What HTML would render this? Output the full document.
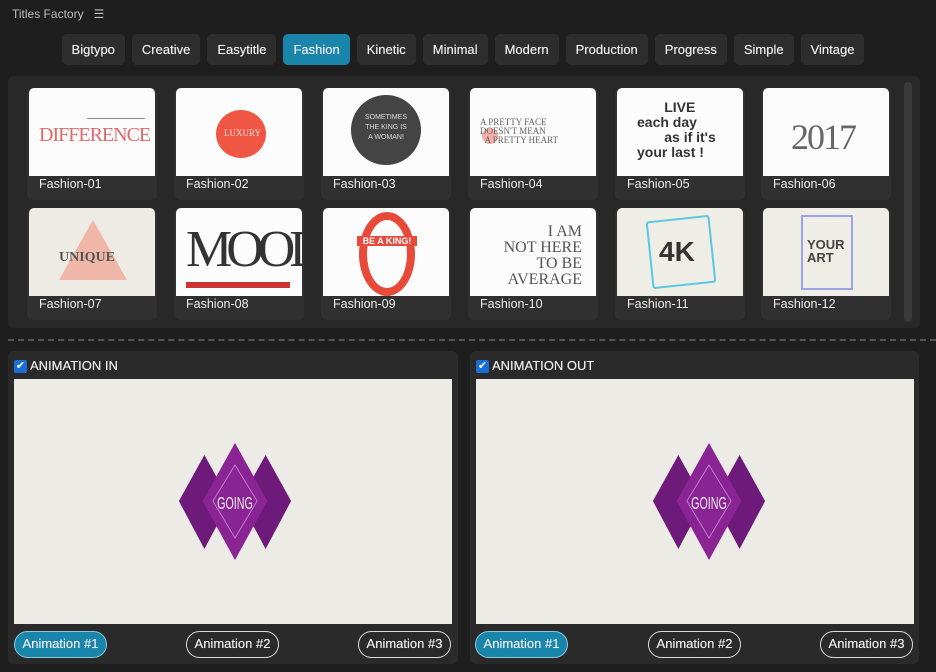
<!DOCTYPE html><html><head><style>
*{margin:0;padding:0;box-sizing:border-box}
body{width:936px;height:672px;background:#1e1e1e;font-family:"Liberation Sans",sans-serif;color:#fff;position:relative;overflow:hidden}
.title{position:absolute;left:12px;top:7px;font-size:12px;color:#bdbdbd}
.tabs{position:absolute;top:34px;left:0;width:926px;display:flex;justify-content:center;gap:7px}
.tab{height:31px;line-height:31px;padding:0 10px;background:#2d2d2d;border-radius:5px;font-size:13px;color:#eee;text-shadow:0 0 0.4px #eee}
.tab.a{background:#1a85ab}
.grid{position:absolute;left:8px;top:76px;width:912px;height:252px;background:#282828;border-radius:6px}
.card{position:absolute;width:130px;height:112px;background:#303030;border-radius:6px}
.img{position:absolute;left:0;top:0;width:126px;height:88px;background:#fdfcfd;border-radius:5px 5px 0 0;overflow:hidden;color:#444}
.lbl{position:absolute;left:10px;top:89px;font-size:12.5px;color:#eee}
.sb{position:absolute;left:904px;top:82px;width:8px;height:240px;background:#3a3a3a;border-radius:4px}
.dash{position:absolute;left:8px;top:339px;width:928px;border-top:2px dashed #555}
.panel{position:absolute;top:351px;width:450px;height:313px;background:#2a2a2a;border-radius:6px}
.chk{position:absolute;left:6px;top:9px;width:13px;height:13px;background:#1a6fd6;border-radius:2px;color:#fff;font-size:11px;line-height:13px;text-align:center}
.ph{position:absolute;left:22px;top:7px;font-size:13px;color:#eee;text-shadow:0 0 0.4px #eee}
.pv{position:absolute;left:6px;top:28px;width:438px;height:245px;background:#ecebe5}
.btn{position:absolute;top:280px;width:93px;height:27px;border:1.5px solid #ddd;border-radius:14px;font-size:13px;line-height:24px;text-align:center;color:#eee;text-shadow:0 0 0.4px #eee}
.btn.a{background:#1a85ab;border-color:#8cc8dc}
</style></head><body>
<div class="title">Titles Factory &nbsp; ☰</div>
<div class="tabs"><div class="tab">Bigtypo</div><div class="tab">Creative</div><div class="tab">Easytitle</div><div class="tab a">Fashion</div><div class="tab">Kinetic</div><div class="tab">Minimal</div><div class="tab">Modern</div><div class="tab">Production</div><div class="tab">Progress</div><div class="tab">Simple</div><div class="tab">Vintage</div></div>
<div class="grid"></div>
<div class="sb"></div>

<div class="card" style="left:27px;top:88px"><div class="img" style="left:2px"><div style="position:absolute;left:58px;top:30px;width:58px;height:1px;background:#888"></div><div style="position:absolute;left:10px;top:36px;font:20px 'Liberation Serif',serif;color:#e06a6a;letter-spacing:-1px">DIFFERENCE</div></div><div class="lbl" style="left:12px">Fashion-01</div></div>
<div class="card" style="left:174px;top:88px"><div class="img" style="left:2px"><div style="position:absolute;left:40px;top:22px;width:50px;height:48px;background:#ef5643;border-radius:50%"></div><div style="position:absolute;left:48px;top:40px;font:9px serif;color:#fdd">LUXURY</div></div><div class="lbl" style="left:12px">Fashion-02</div></div>
<div class="card" style="left:321px;top:88px"><div class="img" style="left:2px"><div style="position:absolute;left:28px;top:7px;width:70px;height:70px;background:#444;border-radius:50%"></div><div style="position:absolute;left:40px;top:25px;width:46px;font-size:7px;color:#ddd;text-align:center;line-height:10px">SOMETIMES THE KING IS A WOMAN!</div></div><div class="lbl" style="left:12px">Fashion-03</div></div>
<div class="card" style="left:468px;top:88px"><div class="img" style="left:2px"><div style="position:absolute;left:12px;top:40px;width:16px;height:16px;background:#f2b0a8;border-radius:50%"></div><div style="position:absolute;left:10px;top:30px;font:9px 'Liberation Serif',serif;line-height:9px;color:#666">A PRETTY FACE<br>DOESN'T MEAN<br>&nbsp;&nbsp;A PRETTY HEART</div></div><div class="lbl" style="left:12px">Fashion-04</div></div>
<div class="card" style="left:615px;top:88px"><div class="img" style="left:2px"><div style="position:absolute;left:20px;top:12px;font:bold 14px sans-serif;line-height:15px;color:#333;text-align:left;width:100px">&nbsp;&nbsp;&nbsp;&nbsp;&nbsp;&nbsp;&nbsp;LIVE<br>each day<br>&nbsp;&nbsp;&nbsp;&nbsp;&nbsp;&nbsp;&nbsp;as if it's<br>your last !</div></div><div class="lbl" style="left:12px">Fashion-05</div></div>
<div class="card" style="left:761px;top:88px"><div class="img" style="left:2px"><div style="position:absolute;left:28px;top:28px;font:36px 'Liberation Serif',serif;color:#666;letter-spacing:-2px">2017</div></div><div class="lbl" style="left:12px">Fashion-06</div></div>

<div class="card" style="left:27px;top:208px"><div class="img" style="left:2px;background:#eeebe4"><div style="position:absolute;left:30px;top:12px;width:0;height:0;border-left:34px solid transparent;border-right:34px solid transparent;border-bottom:60px solid #f0b7a8"></div><div style="position:absolute;left:30px;top:42px;font:bold 14px 'Liberation Serif',serif;color:#555">UNIQUE</div></div><div class="lbl" style="left:12px">Fashion-07</div></div>
<div class="card" style="left:174px;top:208px"><div class="img" style="left:2px"><div style="position:absolute;left:10px;top:14px;font:52px 'Liberation Serif',serif;line-height:56px;color:#333;letter-spacing:-6px">MOOD</div><div style="position:absolute;left:10px;top:74px;width:104px;height:6px;background:#c33"></div></div><div class="lbl" style="left:12px">Fashion-08</div></div>
<div class="card" style="left:321px;top:208px"><div class="img" style="left:2px"><div style="position:absolute;left:36px;top:4px;width:56px;height:84px;border:8px solid #e84a3a;border-radius:50%"></div><div style="position:absolute;left:34px;top:28px;width:60px;font:bold 9px sans-serif;color:#fff;background:#e84a3a;text-align:center">BE A KING!</div></div><div class="lbl" style="left:12px">Fashion-09</div></div>
<div class="card" style="left:468px;top:208px"><div class="img" style="left:2px"><div style="position:absolute;left:16px;top:16px;font:16px 'Liberation Serif',serif;line-height:16px;color:#555;text-align:right;width:96px">I AM<br>NOT HERE<br>TO BE<br>AVERAGE</div></div><div class="lbl" style="left:12px">Fashion-10</div></div>
<div class="card" style="left:615px;top:208px"><div class="img" style="left:2px;background:#eeede6"><div style="position:absolute;left:32px;top:10px;width:64px;height:68px;border:2px solid #5bc8e0;transform:rotate(-6deg);border-radius:3px"></div><div style="position:absolute;left:42px;top:28px;font:bold 28px sans-serif;color:#333">4K</div></div><div class="lbl" style="left:12px">Fashion-11</div></div>
<div class="card" style="left:761px;top:208px"><div class="img" style="left:2px;background:#eeede6"><div style="position:absolute;left:38px;top:7px;width:52px;height:75px;border:2px solid #9aa3e8"></div><div style="position:absolute;left:44px;top:30px;font:bold 13px sans-serif;line-height:13px;color:#444">YOUR<br>ART</div></div><div class="lbl" style="left:12px">Fashion-12</div></div>

<div class="dash"></div>

<div class="panel" style="left:8px"><div class="chk">✔</div><div class="ph">ANIMATION IN</div><div class="pv">
<svg width="438" height="245" style="position:absolute;left:0;top:0"><g transform="translate(221,64) scale(0.85,1) translate(-202,0)"><polygon points="166,12 196,58 166,106 136,58" fill="#6e1a7a"/><polygon points="238,12 268,58 238,106 208,58" fill="#6e1a7a"/><polygon points="202,0 240,58 202,117 164,58" fill="#8a2394"/><polygon points="202,22 228,58 202,95 176,58" fill="none" stroke="#c78ad0" stroke-width="1"/><text x="202" y="66" fill="#eee" font-size="18" font-family="Liberation Sans Narrow,sans-serif" text-anchor="middle" transform="translate(202,0) scale(0.7,1) translate(-202,0)">GOING</text></g></svg></div>
<div class="btn a" style="left:6px">Animation #1</div><div class="btn" style="left:178px">Animation #2</div><div class="btn" style="left:350px">Animation #3</div></div>

<div class="panel" style="left:470px;width:449px"><div class="chk">✔</div><div class="ph">ANIMATION OUT</div><div class="pv">
<svg width="438" height="245" style="position:absolute;left:0;top:0"><g transform="translate(233,64) scale(0.85,1) translate(-202,0)"><polygon points="166,12 196,58 166,106 136,58" fill="#6e1a7a"/><polygon points="238,12 268,58 238,106 208,58" fill="#6e1a7a"/><polygon points="202,0 240,58 202,117 164,58" fill="#8a2394"/><polygon points="202,22 228,58 202,95 176,58" fill="none" stroke="#c78ad0" stroke-width="1"/><text x="202" y="66" fill="#eee" font-size="18" font-family="Liberation Sans Narrow,sans-serif" text-anchor="middle" transform="translate(202,0) scale(0.7,1) translate(-202,0)">GOING</text></g></svg></div>
<div class="btn a" style="left:5px">Animation #1</div><div class="btn" style="left:178px">Animation #2</div><div class="btn" style="left:350px">Animation #3</div></div>
</body></html>
